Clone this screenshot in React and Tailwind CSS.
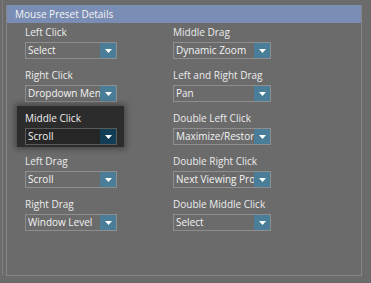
import React from "react";

const font = { fontFamily: '"Open Sans", "Noto Sans", sans-serif' };

function Select({ value, dark, w }) {
  return (
    <div
      className={`flex h-[17px] ${w} border ${
        dark ? "border-[#5a5a5a] bg-[#262626]" : "border-[#8e8e8e] bg-[#6b6b6b]"
      }`}
    >
      <div className="flex-1 overflow-hidden whitespace-nowrap pl-[2px] text-[10px] leading-[15px] text-[#f4f4f4]">
        {value}
      </div>
      <div
        className={`flex w-[16px] shrink-0 items-center justify-center ${
          dark ? "bg-[#123d57]" : "bg-[#4a7e98]"
        }`}
      >
        <svg width="7" height="4" viewBox="0 0 7 4">
          <path d="M0 0H7L3.5 4Z" fill="#ffffff" />
        </svg>
      </div>
    </div>
  );
}

function Field({ label, value, w }) {
  return (
    <div className="flex flex-col">
      <div className="h-[16px] text-[10px] leading-[16px] text-[#ececec]">{label}</div>
      <div className="mt-[2px]">
        <Select value={value} w={w} />
      </div>
    </div>
  );
}

export default function App() {
  const left = [
    ["Left Click", "Select"],
    ["Right Click", "Dropdown Menu"],
    null,
    ["Left Drag", "Scroll"],
    ["Right Drag", "Window Level"],
  ];
  const right = [
    ["Middle Drag", "Dynamic Zoom"],
    ["Left and Right Drag", "Pan"],
    ["Double Left Click", "Maximize/Restore"],
    ["Double Right Click", "Next Viewing Protocol"],
    ["Double Middle Click", "Select"],
  ];
  return (
    <div className="h-[283px] w-[371px] overflow-hidden bg-[#6b6b6b]" style={font}>
      <div className="flex h-full pl-[2px]">
        <div className="h-[276px] w-[1px] bg-[#7c7c7c]" />
        <div className="ml-[3px] mt-[5px] flex h-[271px] w-[356px] flex-col border-x border-b border-[#858585]">
          <div className="h-[18px] bg-[#7a8db4] pl-[8px] text-[10px] leading-[18px] text-[#f4f4f4]">
            Mouse Preset Details
          </div>
          <div className="flex pl-[18px] pt-[1px]">
            <div className="flex w-[148px] flex-col gap-[8px]">
              {left.map((f, i) =>
                f ? (
                  <Field key={i} label={f[0]} value={f[1]} w="w-[92px]" />
                ) : (
                  <div key={i} className="relative flex w-[92px] flex-col">
                    <div className="absolute -bottom-[2px] -left-[8px] -right-[7px] -top-[4px] bg-[#2c2c2c] shadow-[0_0_6px_2px_rgba(0,0,0,0.35)]" />
                    <div className="relative h-[16px] text-[10px] leading-[16px] text-[#f0f0f0]">
                      Middle Click
                    </div>
                    <div className="relative mt-[2px]">
                      <Select value="Scroll" dark w="w-[92px]" />
                    </div>
                  </div>
                )
              )}
            </div>
            <div className="flex flex-col gap-[8px]">
              {right.map((f, i) => (
                <Field key={i} label={f[0]} value={f[1]} w="w-[98px]" />
              ))}
            </div>
          </div>
        </div>
      </div>
    </div>
  );
}
